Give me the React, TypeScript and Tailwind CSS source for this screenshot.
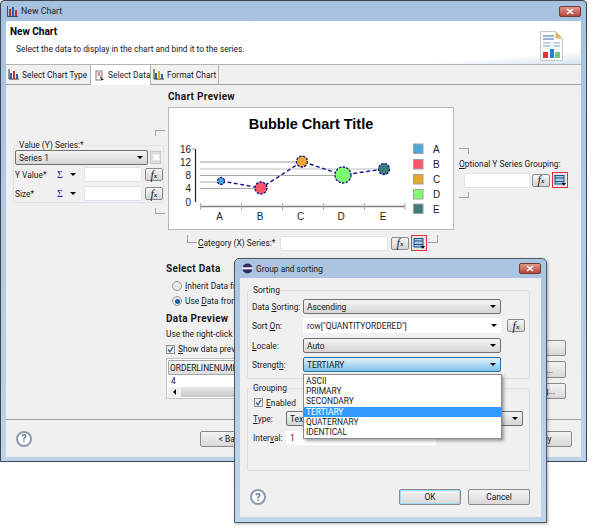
import type { ReactNode } from "react";

function Arrow() {
  return <span className="h-0 w-0 border-x-[3px] border-t-[3px] border-x-transparent border-t-black" />;
}

function Combo({ text, className = "" }: { text: string; className?: string }) {
  return (
    <div className={`flex h-[15px] items-center justify-between rounded-[2px] border border-[#707070] bg-gradient-to-b from-[#f4f4f4] to-[#d6d6d6] pl-[3px] pr-[4px] ${className}`}>
      <span>{text}</span>
      <Arrow />
    </div>
  );
}

function Input({ className = "" }: { className?: string }) {
  return <div className={`h-[15px] rounded-[1px] border border-[#e2e3ea] bg-white ${className}`} />;
}

function Fx({ className = "" }: { className?: string }) {
  return (
    <div className={`flex h-[13px] w-[18px] items-center justify-center rounded-[2px] border border-[#8a8a8a] bg-gradient-to-b from-[#f6f6f6] to-[#d4d4d4] font-['Liberation_Serif',serif] text-[12px] italic leading-none ${className}`}>
      f<span className="mt-[3px] text-[7px] font-bold">x</span>
    </div>
  );
}

function GroupBtn({ className = "" }: { className?: string }) {
  return (
    <div className={`flex h-[16px] w-[16px] items-center justify-center border border-[#e8303a] bg-[#e6e6e6] ${className}`}>
      <svg width="12" height="12" viewBox="0 0 12 12">
        <rect x="1" y="1.5" width="9" height="8.5" fill="#a8cbe8" stroke="#1d4f86" />
        <path d="M1 4h9M1 7.5h9" stroke="#1d4f86" />
        <path d="M7.5 9h4.5l-2.2 2.8z" fill="#000" />
      </svg>
    </div>
  );
}

function Check({ className = "" }: { className?: string }) {
  return (
    <span className={`flex h-[9px] w-[9px] items-center justify-center border border-[#8e8f8f] bg-gradient-to-br from-[#e4e4e4] to-white ${className}`}>
      <svg width="7" height="7" viewBox="0 0 7 7">
        <path d="M1 3.5l2 2.4L6 .8" fill="none" stroke="#3d5a8a" strokeWidth="1.3" />
      </svg>
    </span>
  );
}

function Radio({ on = false }: { on?: boolean }) {
  return (
    <span className="mr-[3px] flex h-[10px] w-[10px] items-center justify-center rounded-full border border-[#9a9a9a] bg-[#e8e8e8]">
      {on && <span className="h-[5px] w-[5px] rounded-full bg-[#1e5f9e]" />}
    </span>
  );
}

function Help({ className = "" }: { className?: string }) {
  return (
    <div className={`flex h-[16px] w-[16px] items-center justify-center rounded-full border-2 border-[#8d9ab0] bg-white text-[11px] font-bold leading-none text-[#6a7a94] ${className}`}>
      ?
    </div>
  );
}

function Btn({ children, className = "" }: { children?: ReactNode; className?: string }) {
  return (
    <div className={`flex h-[16px] items-center justify-center rounded-[2px] border border-[#8a8a8a] bg-gradient-to-b from-[#f4f4f4] to-[#d8d8d8] ${className}`}>
      {children}
    </div>
  );
}

function TabIcon({ kind }: { kind: "bars" | "data" | "format" }) {
  if (kind === "data") {
    return (
      <svg width="10" height="11" viewBox="0 0 10 11" className="mr-[3px] shrink-0">
        <rect x="1" y="1" width="6" height="9" fill="#fff" stroke="#8a7a6a" />
        <path d="M2.5 3h3M2.5 5h3" stroke="#c03030" />
        <path d="M5 6l4 4-3 0z" fill="#333" />
      </svg>
    );
  }
  return (
    <svg width="11" height="11" viewBox="0 0 11 11" className="mr-[3px] shrink-0">
      <path d="M1 0v10h10" fill="none" stroke="#333" />
      <rect x="2" y="4" width="2" height="6" fill="#2e5fa8" />
      <rect x="5" y="2" width="2" height="8" fill={kind === "format" ? "#e8a020" : "#c03030"} />
      <rect x="8" y="5" width="2" height="5" fill="#2e5fa8" />
    </svg>
  );
}

function Chart() {
  const bubbles = [
    { x: 221, y: 181, r: 3.5, c: "#4da6dc" },
    { x: 261, y: 188, r: 6, c: "#f9556b" },
    { x: 302, y: 161.5, r: 5.5, c: "#e8a82f" },
    { x: 343, y: 175, r: 8, c: "#7fff6f" },
    { x: 384, y: 169, r: 5.5, c: "#3d7d78" },
  ];
  const legend = [
    { y: 144, c: "#4da6dc", t: "A" },
    { y: 159.5, c: "#f9556b", t: "B" },
    { y: 174.5, c: "#e8a82f", t: "C" },
    { y: 189.5, c: "#7fff6f", t: "D" },
    { y: 204, c: "#3d7d78", t: "E" },
  ];
  return (
    <svg width="284" height="121" viewBox="169 108 284 121" className="block font-['Liberation_Sans',sans-serif]">
      <text x="311" y="129" textAnchor="middle" fontSize="14.5" fontWeight="700" fill="#000">Bubble Chart Title</text>
      {[
        [149, "16"],
        [162, "12"],
        [175.5, "8"],
        [188.5, "4"],
        [202, "0"],
      ].map(([y, t]) => (
        <text key={t} x="191" y={Number(y) + 3.5} textAnchor="end" fontSize="10" fill="#222">{t}</text>
      ))}
      <path d="M195.5 149v53" stroke="#222" strokeWidth="1.2" />
      <path d="M192 149h3" stroke="#999" />
      <g stroke="#bdbdbd">
        <path d="M200 162h102" strokeWidth="1.5" />
        <path d="M200 169h185" />
        <path d="M200 175.5h143" stroke="#a8a8a8" />
        <path d="M200 182h21" stroke="#a8a8a8" />
        <path d="M200 188.5h61" stroke="#a8a8a8" />
      </g>
      <path d="M200 206.5h205" stroke="#808080" strokeWidth="1.5" />
      <path d="M200.5 203v7M241.5 203v7M282.5 203v7M323.5 203v7M364.5 203v7M405 203v7" stroke="#b0b0b0" />
      {["A", "B", "C", "D", "E"].map((t, i) => (
        <text key={t} x={[219.5, 260, 300.5, 341, 383][i]} y="220" textAnchor="middle" fontSize="10" fill="#222">{t}</text>
      ))}
      <polyline points={bubbles.map((b) => `${b.x},${b.y}`).join(" ")} fill="none" stroke="#14148c" strokeWidth="1.4" strokeDasharray="4 2.5" />
      {bubbles.map((b) => (
        <circle key={b.x} cx={b.x} cy={b.y} r={b.r} fill={b.c} stroke="#14148c" strokeWidth="1.3" strokeDasharray="2.5 1.2" />
      ))}
      {legend.map((l) => (
        <g key={l.t}>
          <rect x="413.5" y={l.y} width="9.5" height="9.5" fill={l.c} stroke="#a0a0a0" />
          <text x="433" y={l.y + 8.5} fontSize="10" fill="#222">{l.t}</text>
        </g>
      ))}
    </svg>
  );
}

function GroupDialog() {
  return (
    <div className="absolute left-[234px] top-[258px] h-[265px] w-[313px] rounded-t-[5px] border border-[#4d5a68] bg-gradient-to-b from-[#a9c4e0] to-[#c2d6ec] shadow-[1px_1px_3px_rgba(0,0,0,0.3)]">
      <div className="flex h-[19px] items-center justify-between pl-[7px] pr-[5px]">
        <div className="flex items-center">
          <svg width="11" height="11" viewBox="0 0 11 11" className="mr-[3px]">
            <circle cx="5.5" cy="5.5" r="5" fill="#2c2a63" />
            <rect x="0" y="4.2" width="11" height="2.2" fill="#e8e8f4" />
          </svg>
          <span className="text-[#1a1a1a]">Group and sorting</span>
        </div>
        <div className="flex h-[11px] w-[22px] items-center justify-center rounded-[2px] border border-[#6d3a34] bg-gradient-to-b from-[#e0968a] to-[#b8453a]">
          <svg width="8" height="7" viewBox="0 0 8 7">
            <path d="M1 1l6 5M7 1L1 6" stroke="#fff" strokeWidth="1.6" />
          </svg>
        </div>
      </div>

      <div className="mx-[5px] h-[239px] bg-[#f0f0f0] pl-[7px] pr-[11px] pt-[7px]">
        <fieldset className="h-[94px] rounded-[2px] border border-[#dfdfdf] pl-[4px]">
          <legend className="ml-px h-[10px] leading-[10px]">Sorting</legend>
          <div className="mt-[4px] flex items-center">
            <span className="w-[51px] whitespace-nowrap">Data <u>S</u>orting:</span>
            <Combo text="Ascending" className="w-[198px]" />
          </div>
          <div className="mt-[4px] flex items-center">
            <span className="w-[51px] whitespace-nowrap">Sort <u>O</u>n:</span>
            <div className="flex h-[15px] w-[198px] items-center justify-between rounded-[1px] bg-white pl-[4px] pr-[4px]">
              <span>row["QUANTITYORDERED"]</span>
              <Arrow />
            </div>
            <Fx className="ml-[6px]" />
          </div>
          <div className="mt-[5px] flex items-center">
            <span className="w-[51px]"><u>L</u>ocale:</span>
            <Combo text="Auto" className="w-[198px]" />
          </div>
          <div className="mt-[4px] flex items-center">
            <span className="w-[51px]">Strengt<u>h</u>:</span>
            <div className="flex h-[15px] w-[198px] items-center justify-between rounded-[2px] border border-[#2c6f9e] bg-gradient-to-b from-[#e4f3fc] to-[#7cc0e6] pl-[3px] pr-[4px]">
              <span>TERTIARY</span>
              <Arrow />
            </div>
          </div>
        </fieldset>

        <fieldset className="mt-[4px] h-[88px] rounded-[2px] border border-[#dfdfdf] pl-[5px]">
          <legend className="h-[10px] leading-[10px]">Grouping</legend>
          <div className="mt-[3px] flex h-[13px] items-center">
            <Check className="ml-[1px] mr-[3px]" />
            <span><u>E</u>nabled</span>
          </div>
          <div className="mt-[2px] flex items-center">
            <span className="w-[33px]"><u>T</u>ype:</span>
            <Combo text="Text" className="w-[237px]" />
          </div>
          <div className="mt-[5px] flex items-center">
            <span className="w-[33px]">Inter<u>v</u>al:</span>
            <div className="flex h-[14px] w-[150px] items-center rounded-[1px] bg-white pl-[4px]">1</div>
          </div>
        </fieldset>

        <div className="mt-[18px] flex items-center justify-between pl-[3px]">
          <Help />
          <div className="flex gap-[7px]">
            <Btn className="w-[62px] border-[#3c7fb1] shadow-[inset_0_0_0_1px_#9edcf5]">OK</Btn>
            <Btn className="w-[62px]">Cancel</Btn>
          </div>
        </div>
      </div>

      <div className="absolute left-[68px] top-[115px] flex h-[65px] w-[199px] flex-col border border-[#8a8a8a] bg-white py-px leading-[10px] shadow-[2px_2px_3px_rgba(0,0,0,0.35)]">
        {["ASCII", "PRIMARY", "SECONDARY", "TERTIARY", "QUATERNARY", "IDENTICAL"].map((item) => (
          <div
            key={item}
            className={`flex flex-1 items-center pl-[2px] ${item === "TERTIARY" ? "bg-[#3399ff] text-white" : ""}`}
          >
            {item}
          </div>
        ))}
      </div>
    </div>
  );
}

export default function App() {
  return (
    <div className="relative h-[528px] w-[592px] overflow-hidden bg-white font-['Roboto',sans-serif] text-[8.4px] leading-[12px] text-[#1a1a1a]">
      <div className="h-[462px] w-[587px] rounded-t-[4px] border border-[#3d4650] bg-gradient-to-b from-[#a6c2df] to-[#bcd3ea] px-[5px]">
        {/* Title bar */}
        <div className="flex h-[20px] items-center justify-between pl-[1px]">
          <div className="flex items-center">
            <svg width="11" height="11" viewBox="0 0 11 11" className="mr-[3px]">
              <path d="M.5 0v10.5H11" fill="none" stroke="#3a4a6a" />
              <rect x="2" y="3" width="2" height="7" fill="#c03030" />
              <rect x="5" y="1" width="2" height="9" fill="#2e5fa8" />
              <rect x="8" y="4" width="2" height="6" fill="#c03030" />
            </svg>
            <span className="text-[8.8px] text-[#222]">New Chart</span>
          </div>
          <div className="flex h-[11px] w-[22px] items-center justify-center rounded-[2px] border border-[#6d3a34] bg-gradient-to-b from-[#e0968a] to-[#b8453a]">
            <svg width="8" height="7" viewBox="0 0 8 7">
              <path d="M1 1l6 5M7 1L1 6" stroke="#fff" strokeWidth="1.6" />
            </svg>
          </div>
        </div>

        <div className="h-[436px] w-[575px] bg-[#f0f0f0]">
          {/* Header */}
          <div className="flex h-[44px] justify-between border-b border-[#b4b4b4] bg-gradient-to-br from-white from-[85%] to-[#d6e2f0] pl-[4px] pr-[18px]">
            <div>
              <div className="mt-[5px] text-[10px] font-bold text-black">New Chart</div>
              <div className="ml-[6px] mt-[5px]">Select the data to display in the chart and bind it to the series.</div>
            </div>
            <svg width="23" height="30" viewBox="0 0 23 30" className="mt-[10px]">
              <path d="M.5.5h15l7 7v22H.5z" fill="#fdfdfd" stroke="#c8c8c8" />
              <path d="M15.5.5l7 7h-7z" fill="#e8b060" />
              <path d="M3 5h11M3 8h11" stroke="#3d6ea8" />
              <path d="M3 12h8M13 12h7M3 15h8M13 15h7" stroke="#8aa8c8" />
              <rect x="3" y="21" width="5" height="6" fill="#e0304a" />
              <rect x="10" y="18" width="4" height="9" fill="#2a80c8" />
              <rect x="15" y="21" width="5" height="6" fill="#80c080" />
            </svg>
          </div>

          {/* Tabs */}
          <div className="flex h-[20px] whitespace-nowrap border-b border-[#a0a0a0]">
            <div className="flex w-[85px] items-center border-r border-[#b0b0b0] pl-[2px]">
              <TabIcon kind="bars" />
              Select Chart Type
            </div>
            <div className="-mb-px flex w-[59px] items-center bg-white pl-[4px]">
              <TabIcon kind="data" />
              Select Data
            </div>
            <div className="flex w-[69px] items-center border-x border-[#b0b0b0] pl-[2px]">
              <TabIcon kind="format" />
              Format Chart
            </div>
          </div>

          {/* Page */}
          <div className="h-[335px] border-b border-[#a0a0a0]">
            <div className="flex">
              <div className="w-[162px] pt-[45px]">
                <div className="ml-[149px] h-[6px] w-[10px] border-l border-t border-[#a0a0a0]" />
                <fieldset className="ml-[7px] mt-[4px] h-[63px] w-[151px] rounded-[3px] border border-[#dde3ea] pl-[1px]">
                  <legend className="ml-[4px] h-[10px] leading-[10px]">Value (Y) Series:*</legend>
                  <div className="flex items-center">
                    <Combo text="Series 1" className="w-[133px]" />
                    <div className="ml-[2px] flex h-[13px] w-[11px] items-center justify-center border border-[#c8c8c8] bg-[#dcdcdc] text-[10px] font-bold leading-none text-white">✖</div>
                  </div>
                  <div className="mt-[2px] flex items-center">
                    <span className="w-[30px] whitespace-nowrap">Y Value*</span>
                    <span className="ml-[12px] font-['Liberation_Serif',serif] text-[10px] text-[#22229a]">Σ</span>
                    <span className="ml-[7px] flex"><Arrow /></span>
                    <Input className="ml-[8px] w-[58px]" />
                    <Fx className="ml-[3px]" />
                  </div>
                  <div className="mt-[4px] flex items-center">
                    <span className="w-[30px]">Size*</span>
                    <span className="ml-[12px] font-['Liberation_Serif',serif] text-[10px] text-[#22229a]">Σ</span>
                    <span className="ml-[7px] flex"><Arrow /></span>
                    <Input className="ml-[8px] w-[58px]" />
                    <Fx className="ml-[3px]" />
                  </div>
                </fieldset>
                <div className="ml-[149px] mt-[5px] h-[6px] w-[10px] border-b border-l border-[#a0a0a0]" />
              </div>

              <div className="w-[286px] pt-[6px]">
                <div className="h-[16px] text-[10px] font-bold tracking-[0.3px]">Chart Preview</div>
                <div className="h-[123px] border border-[#b8b8b8] bg-white">
                  <Chart />
                </div>
                <div className="mt-[5px] flex h-[16px] items-center pl-[19px]">
                  <div className="h-[8px] w-[10px] self-start border-b border-l border-[#a0a0a0]" />
                  <span className="ml-[1px] w-[82px] whitespace-nowrap"><u>C</u>ategory (X) Series:*</span>
                  <Input className="w-[108px]" />
                  <Fx className="ml-[3px]" />
                  <GroupBtn className="ml-[2px]" />
                  <div className="ml-[1px] h-[8px] w-[10px] self-start border-b border-r border-[#a0a0a0]" />
                </div>
              </div>

              <div className="pl-[5px] pt-[63px]">
                <div className="h-[6px] w-[10px] border-r border-t border-[#a0a0a0]" />
                <div className="mt-[4px] whitespace-nowrap"><u>O</u>ptional Y Series Grouping:</div>
                <div className="ml-[5px] mt-[2px] flex items-center">
                  <Input className="w-[66px]" />
                  <Fx className="ml-[2px]" />
                  <GroupBtn className="ml-[2px]" />
                </div>
                <div className="mt-[4px] h-[6px] w-[10px] border-b border-r border-[#a0a0a0]" />
              </div>
            </div>

            {/* Data section */}
            <div className="ml-[160px] mt-[12px] w-[400px]">
              <div className="text-[10px] font-bold tracking-[0.3px]">Select Data</div>
              <div className="ml-[6px] mt-[5px] flex h-[12px] items-center">
                <Radio />
                <span><u>I</u>nherit Data from Container</span>
              </div>
              <div className="ml-[6px] mt-[3px] flex h-[12px] items-center">
                <Radio on />
                <span>Use <u>D</u>ata from</span>
              </div>
              <div className="mt-[6px] text-[10px] font-bold tracking-[0.3px]">Data Preview</div>
              <div className="mt-[3px]">Use the right-click menu to define series</div>
              <div className="flex gap-[5px]">
                <div className="w-[319px]">
                  <div className="flex h-[18px] items-center">
                    <Check className="mr-[3px]" />
                    <span><u>S</u>how data preview</span>
                  </div>
                  <div className="h-[41px] border border-[#c4c4c4] bg-white p-px">
                    <div className="flex h-[15px] items-center rounded-[1px] border border-[#a8a8a8] bg-gradient-to-b from-[#f6f6f6] to-[#dcdcdc] pl-[1px]">ORDERLINENUMBER</div>
                    <div className="h-[11px] pl-[3px] leading-[13px]">4</div>
                    <div className="mt-px flex h-[10px] items-center bg-[#f0f0f0]">
                      <span className="ml-[5px] h-0 w-0 border-y-[3px] border-r-[3px] border-y-transparent border-r-black" />
                      <div className="ml-[5px] h-full flex-1 rounded-[1px] bg-gradient-to-b from-[#e8e8e8] to-[#c8c8c8]" />
                    </div>
                  </div>
                </div>
                <div className="flex w-[76px] flex-col gap-[5px]">
                  <Btn>Filters...</Btn>
                  <Btn className="h-[17px]">Parameters...</Btn>
                  <Btn>Data Binding...</Btn>
                </div>
              </div>
            </div>
          </div>

          {/* Footer */}
          <div className="flex h-[37px] items-center justify-between pl-[10px] pr-[9px]">
            <Help />
            <div className="flex w-[372px] justify-between">
              <Btn className="w-[62px]">&lt; Back</Btn>
              <Btn className="w-[62px]">Next &gt;</Btn>
              <Btn className="w-[62px]">Finish</Btn>
              <Btn className="w-[62px]">Apply</Btn>
            </div>
          </div>
        </div>
      </div>

      <GroupDialog />
    </div>
  );
}
